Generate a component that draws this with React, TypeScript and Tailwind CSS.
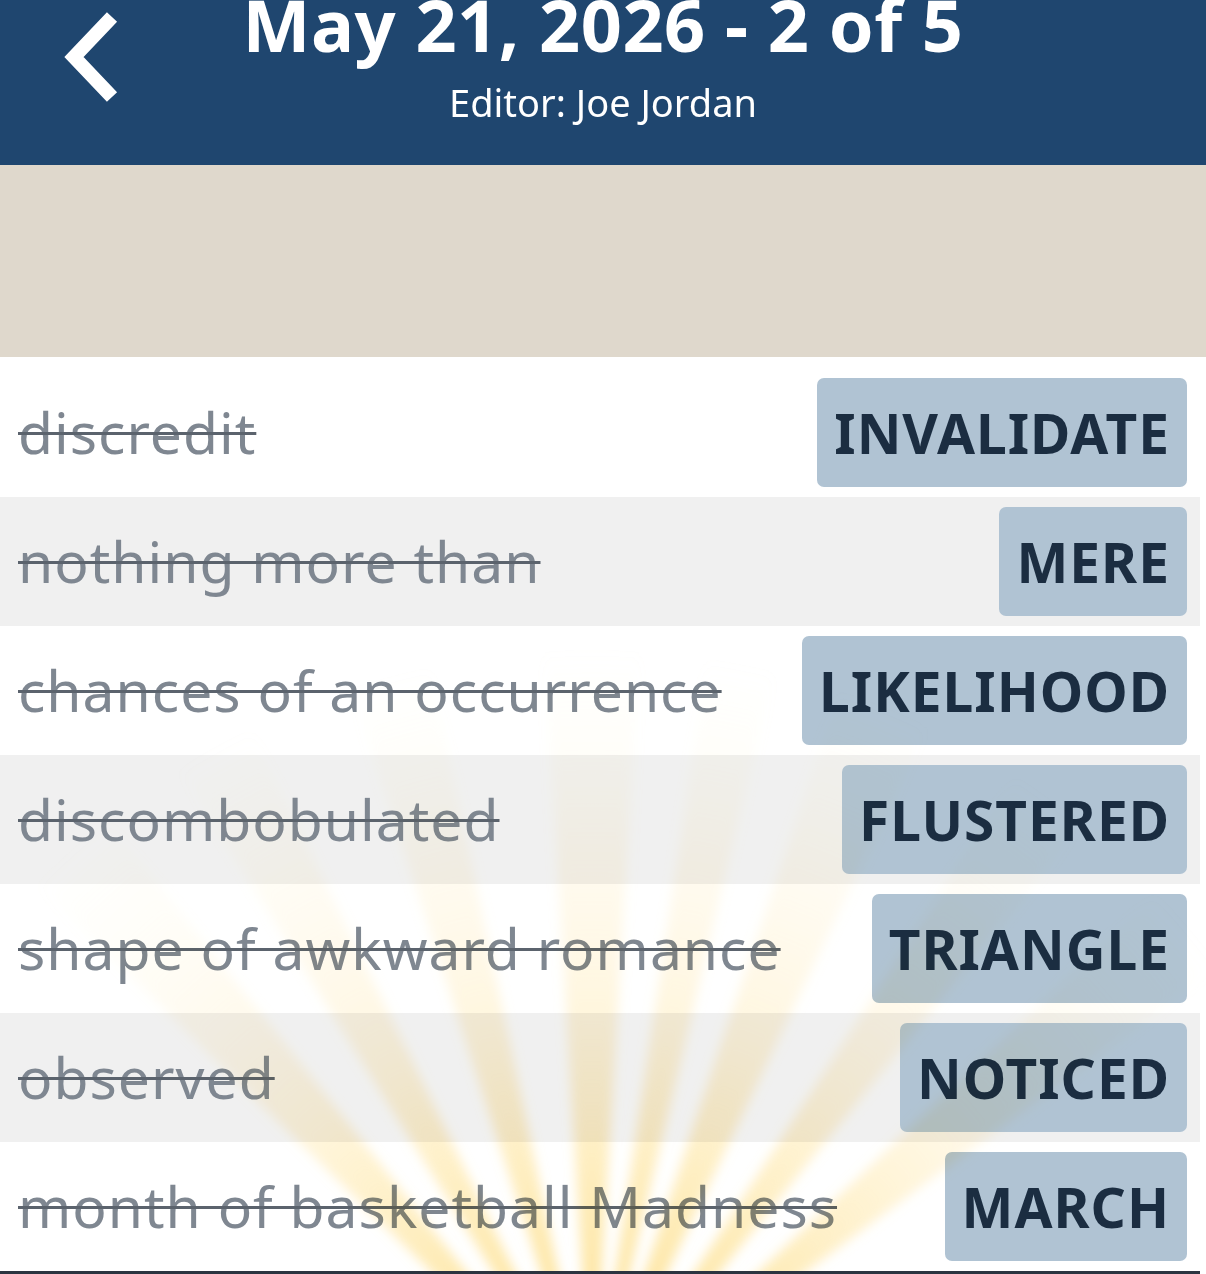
const words = [
  { clue: "discredit", answer: "INVALIDATE" },
  { clue: "nothing more than", answer: "MERE" },
  { clue: "chances of an occurrence", answer: "LIKELIHOOD" },
  { clue: "discombobulated", answer: "FLUSTERED" },
  { clue: "shape of awkward romance", answer: "TRIANGLE" },
  { clue: "observed", answer: "NOTICED" },
  { clue: "month of basketball Madness", answer: "MARCH" },
];

// tilt from vertical and half-width of each ray, in degrees
const rayAngles = [
  { tilt: -42, half: 3.5 },
  { tilt: -29, half: 3 },
  { tilt: -15, half: 3 },
  { tilt: 0, half: 3.5 },
  { tilt: 11, half: 2.5 },
  { tilt: 22, half: 3.5 },
  { tilt: 36, half: 3 },
  { tilt: 50, half: 3.5 },
];

// rays fanning out from below the list
function Sunburst() {
  const cx = 592;
  const cy = 1430;
  const r = 1100;
  return (
    <svg
      className="pointer-events-none absolute left-0 top-0 mix-blend-multiply"
      width="1206"
      height="914"
      viewBox="0 357 1206 914"
    >
      <defs>
        <radialGradient id="rayFade" cx={cx} cy={cy} r="780" gradientUnits="userSpaceOnUse">
          <stop offset="0" stopColor="#fcd870" stopOpacity="0.85" />
          <stop offset="0.3" stopColor="#fddc80" stopOpacity="0.55" />
          <stop offset="0.6" stopColor="#fee7a8" stopOpacity="0.3" />
          <stop offset="1" stopColor="#fff3cc" stopOpacity="0" />
        </radialGradient>
        <filter id="soft">
          <feGaussianBlur stdDeviation="6" />
        </filter>
      </defs>
      <g filter="url(#soft)">
        {rayAngles.map((ray, i) => {
          const a = ((ray.tilt - 90) * Math.PI) / 180;
          const h = (ray.half * Math.PI) / 180;
          const x1 = cx + r * Math.cos(a - h);
          const y1 = cy + r * Math.sin(a - h);
          const x2 = cx + r * Math.cos(a + h);
          const y2 = cy + r * Math.sin(a + h);
          return <polygon key={i} points={`${cx},${cy} ${x1},${y1} ${x2},${y2}`} fill="url(#rayFade)" />;
        })}
      </g>
    </svg>
  );
}

export default function App() {
  return (
    <div className="w-[1206px] h-[1274px] overflow-hidden bg-white font-['Noto_Sans',sans-serif]">
      <header className="relative h-[165px] bg-[#1f466f] text-white flex flex-col items-center">
        <svg
          className="absolute left-[58px] top-[10px]"
          width="70"
          height="94"
          viewBox="0 0 70 94"
        >
          <polyline
            points="54,7 16,47 54,87"
            fill="none"
            stroke="white"
            strokeWidth="14"
            strokeLinecap="butt"
            strokeLinejoin="miter"
          />
        </svg>
        <h1 className="mt-[-12px] text-[72px] leading-none font-bold tracking-[0.5px] whitespace-nowrap">
          May 21, 2026 - 2 of 5
        </h1>
        <p className="mt-[23px] text-[38px] leading-none">Editor: Joe Jordan</p>
      </header>

      <div className="h-[192px] bg-[#dfd8cc]" />

      <div className="relative pt-[11px] mr-[6px]">
        {words.map((w, i) => (
          <div
            key={w.answer}
            className={
              "h-[129px] flex items-center justify-between pl-[18px] pr-[13px] " +
              (i % 2 === 1 ? "bg-[#f0f0f0]" : "bg-white")
            }
          >
            <span className="text-[57px] leading-none text-[#7f8791] line-through decoration-[#5b636d] decoration-[3px] tracking-[1px] whitespace-nowrap">
              {w.clue}
            </span>
            <button className="h-[109px] px-[17px] rounded-[7px] bg-[#b0c3d3] text-[#1b2d41] text-[55px] font-bold leading-none tracking-[1px]">
              {w.answer}
            </button>
          </div>
        ))}
        <div className="h-[3px] bg-[#2b3440]" />
        <Sunburst />
      </div>
    </div>
  );
}
